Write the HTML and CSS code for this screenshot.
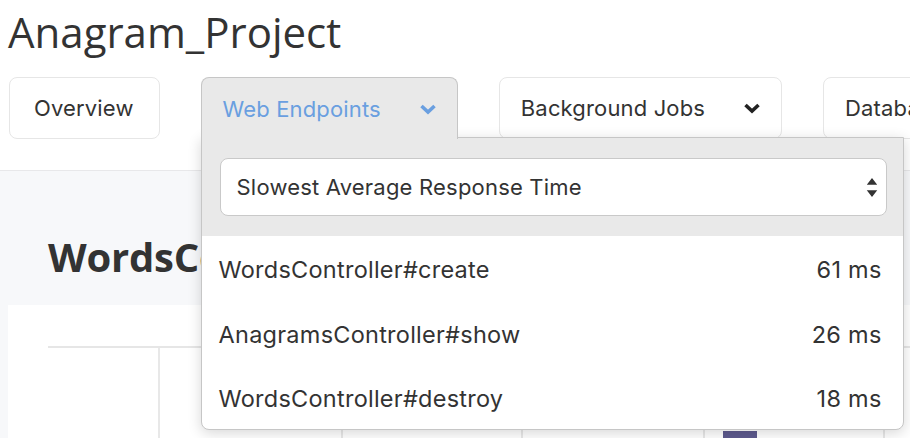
FILE: index.html
```html
<!DOCTYPE html>
<html lang="en">
<head>
<meta charset="utf-8">
<title>Anagram_Project</title>
<link rel="stylesheet" href="styles.css">
</head>
<body>
<header class="page-head">
  <h1 class="title">Anagram_Project</h1>
  <nav class="tabs">
    <div class="tab tab-overview">Overview</div>
    <div class="tab-wrap">
      <div class="tab tab-active">
        <span>Web Endpoints</span>
        <svg class="chev" viewBox="0 0 18 12" width="18" height="12"><path d="M2.5 3 L9 9 L15.5 3" fill="none" stroke="currentColor" stroke-width="3.6" stroke-linejoin="miter"/></svg>
      </div>
      <div class="panel">
        <div class="panel-top">
          <div class="select">
            <span>Slowest Average Response Time</span>
            <svg class="sort" viewBox="0 0 12 20" width="12" height="20"><path d="M6 0 L11.5 7 L0.5 7 Z M6 20 L11.5 13 L0.5 13 Z" fill="#333"/></svg>
          </div>
        </div>
        <ul class="list">
          <li class="row"><span>WordsController#create</span><span>61 ms</span></li>
          <li class="row"><span>AnagramsController#show</span><span>26 ms</span></li>
          <li class="row"><span>WordsController#destroy</span><span>18 ms</span></li>
        </ul>
      </div>
    </div>
    <div class="tab tab-bg">
      <span>Background Jobs</span>
      <svg class="chev" viewBox="0 0 18 12" width="18" height="12"><path d="M2.5 3 L9 9 L15.5 3" fill="none" stroke="currentColor" stroke-width="3.6" stroke-linejoin="miter"/></svg>
    </div>
    <div class="tab tab-db">Database</div>
  </nav>
</header>
<main class="content">
  <h2 class="heading">WordsController#create</h2>
  <div class="card">
    <div class="chart">
      <div class="col col-axis"></div>
      <div class="col c1"></div>
      <div class="col c2"></div>
      <div class="col c3"></div>
      <div class="col c4"><div class="bar"></div></div>
      <div class="col c5"></div>
    </div>
  </div>
</main>
</body>
</html>
```
FILE: styles.css
```css
* { box-sizing: border-box; }
html, body { margin: 0; padding: 0; }
body {
  width: 910px;
  height: 438px;
  overflow: hidden;
  background: #fff;
  font-family: Inter, "Noto Sans", sans-serif;
  color: #333;
}
.page-head { padding: 0 0 0 8px; }
.title {
  margin: 0;
  padding-top: 4px;
  height: 77px;
  font-family: "Open Sans", "Noto Sans", sans-serif;
  font-weight: 400;
  font-size: 42px;
  line-height: 56px;
  color: #333;
}
.tabs {
  display: flex;
  gap: 41px;
  padding-left: 1px;
  white-space: nowrap;
}
.tab {
  flex-shrink: 0;
  height: 62px;
  display: flex;
  align-items: center;
  gap: 38px;
  border: 1px solid #e6e6e6;
  border-radius: 8px;
  padding: 0 20px 0 21px;
  font-size: 22px;
  letter-spacing: 0.15px;
  color: #333;
  background: #fff;
}
.tab-overview { padding: 0 25px 0 24px; }
.tab-wrap { position: relative; flex-shrink: 0; }
.tab-active {
  position: relative;
  z-index: 3;
  background: #e9e9e9;
  border-color: #c6c6c6;
  border-bottom: none;
  border-radius: 8px 8px 0 0;
  color: #6a9fe0;
}
.tab-active .chev { color: #6a9fe0; }
.chev { display: block; color: #222; }
.tab-bg { gap: 38px; }
.tab-db { padding-right: 30px; }
.panel {
  position: absolute;
  z-index: 2;
  top: 60px;
  left: 0;
  width: 703px;
  height: 293px;
  background: #fff;
  border: 1px solid #c6c6c6;
  border-radius: 0 0 8px 8px;
  box-shadow: 0 3px 14px rgba(0,0,0,0.16);
  overflow: hidden;
}
.panel-top {
  background: #e9e9e9;
  padding: 20px 16px 20px 18px;
}
.select {
  height: 58px;
  background: #fff;
  border: 1px solid #c9c9c9;
  border-radius: 8px;
  display: flex;
  align-items: center;
  justify-content: space-between;
  padding: 0 8px 0 16px;
  font-size: 22px;
  letter-spacing: 0.2px;
  color: #333;
}
.sort { display: block; width: 12px; height: 19px; }
.list {
  list-style: none;
  margin: 0;
  padding: 0 21px 0 17px;
}
.row {
  height: 64px;
  display: flex;
  align-items: center;
  justify-content: space-between;
  font-size: 23.5px;
  letter-spacing: 0.25px;
  color: #333;
}
.row:first-child { height: 66px; }
.content {
  margin-top: 31px;
  border-top: 1px solid #e8e8ea;
  background: #f7f8fa;
  padding: 0 0 0 8px;
  height: 268px;
  overflow: hidden;
}
.heading {
  margin: 0;
  padding: 58px 0 0 40px;
  height: 134px;
  font-family: "Open Sans", "Noto Sans", sans-serif;
  font-weight: 700;
  font-size: 40px;
  letter-spacing: -0.2px;
  line-height: 56px;
  color: #333;
  white-space: nowrap;
}
.card {
  background: #fff;
  height: 200px;
  padding: 41px 0 0 40px;
}
.chart {
  display: grid;
  grid-template-columns: 110px 183px 180px 182px 180px 1fr;
  height: 120px;
  border-top: 2px solid #e6e6e6;
}
.col { border-left: 2px solid #e8e8e8; position: relative; }
.col-axis { border-left: none; }
.bar {
  position: absolute;
  left: 18px;
  top: 83px;
  width: 34px;
  height: 40px;
  background: #5e5a8e;
}
```
